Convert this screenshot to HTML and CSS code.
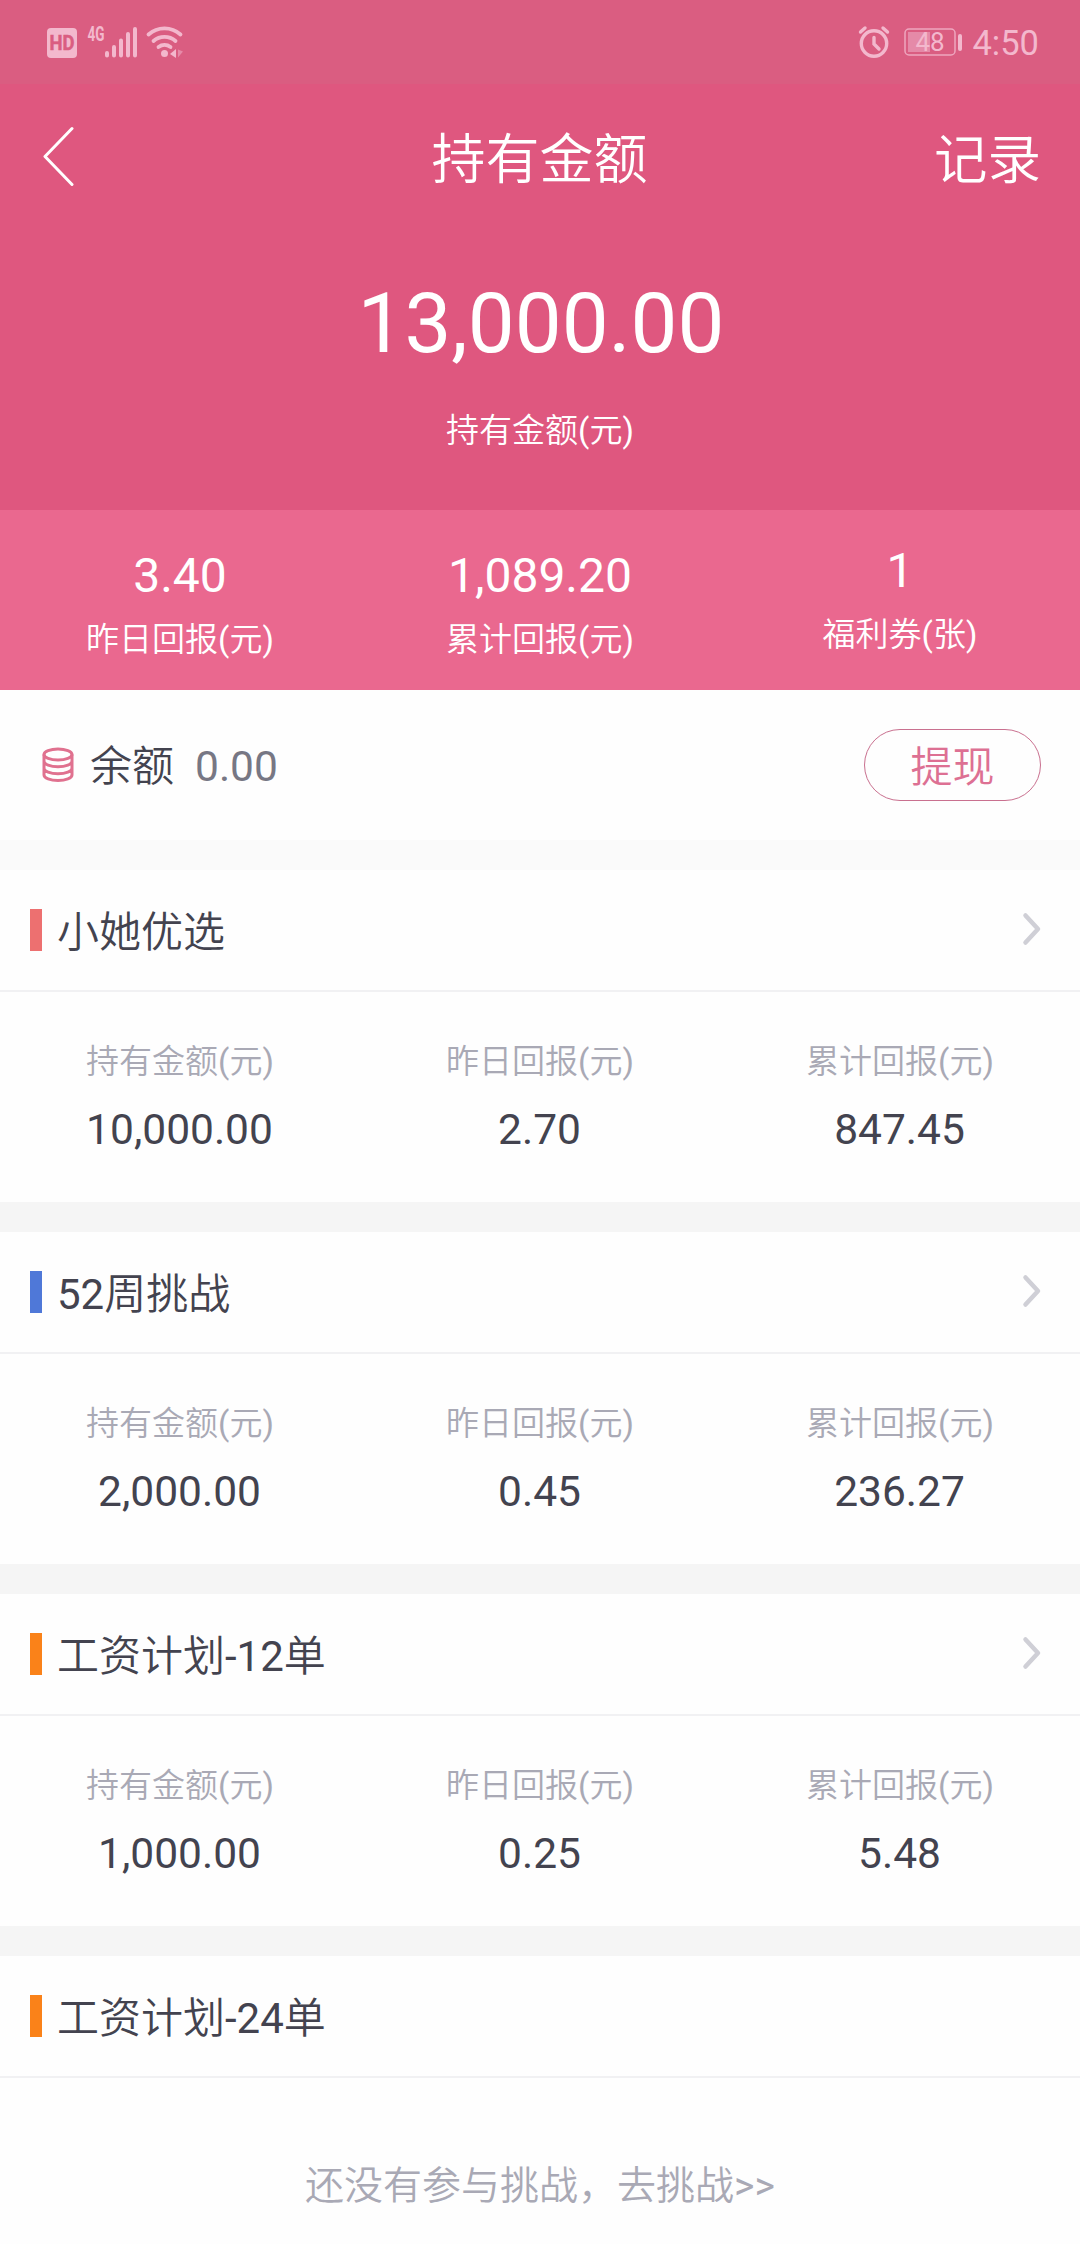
FILE: index.html
```html
<!DOCTYPE html>
<html lang="zh-CN">
<head>
<meta charset="utf-8">
<title>持有金额</title>
<link rel="stylesheet" href="styles.css">
</head>
<body>
<header class="hero">
  <div class="status">
    <svg class="status-left" width="142" height="40" viewBox="0 0 142 40">
      <rect x="4" y="8" width="30" height="30" rx="4" fill="#f3b8cd"/>
      <text x="19" y="30" class="hd" textLength="25" lengthAdjust="spacingAndGlyphs">HD</text>
      <text x="44.500" y="20.500" class="net" textLength="17" lengthAdjust="spacingAndGlyphs">4G</text>
      <g stroke="#f3b8cd" stroke-width="4" stroke-linecap="round">
        <path d="M64 33v2.500M71 27v8.500M78 20.500v15M85 14v21.500M92 9v26.500"/>
      </g>
      <g fill="none" stroke="#f3b8cd" stroke-width="3.800" stroke-linecap="round">
        <path d="M105.500 14.500a24 24 0 0 1 32 0M110.500 21a17 17 0 0 1 22 0M115.500 27a10 10 0 0 1 12 0"/>
      </g>
      <circle cx="121.500" cy="33.500" r="3.500" fill="#f3b8cd"/>
      <path d="M127 34l6-5v9z" fill="#f3b8cd"/>
      <path d="M135 29.500v8l5-6z" fill="#e68aa8"/>
    </svg>
    <div class="status-right">
      <svg width="34" height="34" viewBox="0 0 34 34" fill="none" stroke="#f3b8cd" stroke-linecap="round">
        <circle cx="17" cy="18.500" r="12.700" stroke-width="3.400"/>
        <path d="M17 12.500v6.500l5 5" stroke-width="3.400"/>
        <path d="M3.500 7l4.500-4M30.500 7l-4.500-4" stroke-width="3.400"/>
      </svg>
      <svg class="battery" width="60" height="30" viewBox="0 0 60 30">
        <rect x="1" y="2" width="50" height="26" rx="4" fill="none" stroke="#eea6bf" stroke-width="1.500"/>
        <rect x="4" y="5" width="22" height="20" fill="#e58aa8"/>
        <rect x="54" y="7" width="4" height="17" rx="2" fill="#f3b8cd"/>
        <text x="26" y="24" class="pct">48</text>
      </svg>
      <span class="clock">4:50</span>
    </div>
  </div>
  <nav class="nav">
    <svg class="back" width="32" height="62" viewBox="0 0 32 62" fill="none" stroke="#fff" stroke-width="3" stroke-linecap="round" stroke-linejoin="round"><path d="M29 2.500L2 30.500L29 58.500"/></svg>
    <h1 class="title">持有金额</h1>
    <a class="record">记录</a>
  </nav>
  <div class="total">13,000.00</div>
  <div class="total-label">持有金额<i>(</i>元<i>)</i></div>
</header>
<section class="stats">
  <div class="stat"><b>3.40</b><span>昨日回报<i>(</i>元<i>)</i></span></div>
  <div class="stat"><b>1,089.20</b><span>累计回报<i>(</i>元<i>)</i></span></div>
  <div class="stat stat-coupon"><b>1</b><span>福利券<i>(</i>张<i>)</i></span></div>
</section>
<section class="balance">
  <svg class="coins" width="32" height="36" viewBox="0 0 32 36" fill="none" stroke="#e0718f" stroke-width="3">
    <ellipse cx="16" cy="7.500" rx="14" ry="5.500"/>
    <path d="M2 7.500v20.500c0 3 6.300 5.500 14 5.500s14-2.500 14-5.500V7.500M2 14.300c0 3 6.300 5.500 14 5.500s14-2.500 14-5.500M2 21.200c0 3 6.300 5.500 14 5.500s14-2.500 14-5.500"/>
  </svg>
  <span class="balance-name">余额</span>
  <span class="balance-value">0.00</span>
  <button class="withdraw">提现</button>
</section>
<main class="plans">
  <section class="plan">
    <h2 class="plan-head"><span class="mark red"></span><span class="plan-name">小她优选</span><svg class="more" width="20" height="34" viewBox="0 0 20 34"><path d="M3.500 3.500L16 17L3.500 30.500"/></svg></h2>
    <div class="figures">
      <div class="figure"><span>持有金额<i>(</i>元<i>)</i></span><b>10,000.00</b></div>
      <div class="figure"><span>昨日回报<i>(</i>元<i>)</i></span><b>2.70</b></div>
      <div class="figure"><span>累计回报<i>(</i>元<i>)</i></span><b>847.45</b></div>
    </div>
  </section>
  <section class="plan">
    <h2 class="plan-head"><span class="mark blue"></span><span class="plan-name"><i>52</i>周挑战</span><svg class="more" width="20" height="34" viewBox="0 0 20 34"><path d="M3.500 3.500L16 17L3.500 30.500"/></svg></h2>
    <div class="figures">
      <div class="figure"><span>持有金额<i>(</i>元<i>)</i></span><b>2,000.00</b></div>
      <div class="figure"><span>昨日回报<i>(</i>元<i>)</i></span><b>0.45</b></div>
      <div class="figure"><span>累计回报<i>(</i>元<i>)</i></span><b>236.27</b></div>
    </div>
  </section>
  <section class="plan">
    <h2 class="plan-head"><span class="mark orange"></span><span class="plan-name">工资计划<i>-12</i>单</span><svg class="more" width="20" height="34" viewBox="0 0 20 34"><path d="M3.500 3.500L16 17L3.500 30.500"/></svg></h2>
    <div class="figures">
      <div class="figure"><span>持有金额<i>(</i>元<i>)</i></span><b>1,000.00</b></div>
      <div class="figure"><span>昨日回报<i>(</i>元<i>)</i></span><b>0.25</b></div>
      <div class="figure"><span>累计回报<i>(</i>元<i>)</i></span><b>5.48</b></div>
    </div>
  </section>
  <section class="plan">
    <h2 class="plan-head"><span class="mark orange"></span><span class="plan-name">工资计划<i>-24</i>单</span></h2>
    <p class="empty">还没有参与挑战，去挑战<i>&gt;&gt;</i></p>
  </section>
</main>
</body>
</html>
```
FILE: styles.css
```css
* { box-sizing: border-box; margin: 0; padding: 0; }
body {
  width: 1080px;
  height: 2244px;
  overflow: hidden;
  background: #fefefe;
  color: #43434f;
  font-family: Roboto, "Noto Sans CJK SC", sans-serif;
  font-weight: 350;
}
h1, h2 { font-weight: 350; }
/* Latin digits and brackets sit at regular weight beside the lighter Chinese text */
b, i { font-weight: 400; font-style: normal; }
svg { display: block; flex: none; }

.hero { height: 510px; background: #df577f; color: #fff; text-align: center; }
.status {
  height: 84px;
  padding: 0 41px 0 43px;
  display: flex;
  justify-content: space-between;
  background: #da5d81;
  color: #f3b8cd;
}
.status-left { margin-top: 20px; }
.hd { font: 700 20px Roboto, sans-serif; fill: #da5d81; stroke: #da5d81; stroke-width: 0.5px; text-anchor: middle; }
.net { font: 700 20px Roboto, sans-serif; fill: #f3b8cd; }
.status-right { display: flex; padding-top: 25px; }
.battery { margin: 2px 0 0 13px; }
.pct { font: 400 26px Roboto, sans-serif; fill: #f3b8cd; text-anchor: middle; }
.clock { margin-left: 8px; font-size: 34.5px; line-height: 37px; font-weight: 400; }

.nav {
  height: 150px;
  padding: 0 39px 0 43px;
  display: grid;
  grid-template-columns: 1fr auto 1fr;
  align-items: center;
}
.back { margin-top: -4px; }
.title, .record { padding-top: 4px; font-size: 54px; line-height: 80px; }
.title { margin-left: -5px; }
.record { justify-self: end; font-size: 53.5px; }
.total { margin: 39px 0 0 2px; font-size: 83.5px; line-height: 101px; font-weight: 400; }
.total-label { margin-top: 33px; font-size: 33px; line-height: 48px; }

.stats {
  height: 180px;
  display: grid;
  grid-template-columns: repeat(3, 1fr);
  background: #ea688f;
  color: #fff;
  text-align: center;
}
.stat { display: flex; flex-direction: column; padding-top: 38px; }
.stat-coupon { padding-top: 33px; }
.stat b { font-size: 48px; line-height: 56px; }
.stat span { margin-top: 12px; font-size: 33px; line-height: 48px; }

.balance {
  height: 150px;
  padding: 0 39px 0 42px;
  display: flex;
  align-items: center;
  font-size: 42px;
  line-height: 60px;
}
.balance-name { margin-left: 16px; padding-top: 4px; }
.balance-value { margin-left: 21px; padding-top: 4px; color: #777784; font-size: 42.5px; font-weight: 400; }
.withdraw {
  width: 177px;
  height: 72px;
  margin-left: auto;
  padding-top: 5px;
  border: 1px solid #c9708f;
  border-radius: 36px;
  background: transparent;
  color: #dd7093;
  font: inherit;
}

.plan { height: 362px; border-top: 30px solid #f5f5f5; }
.plan:first-child { border-color: #fafafa; }
.plan-head {
  height: 122px;
  padding: 0 38px 0 30px;
  display: flex;
  align-items: center;
  border-bottom: 2px solid #f1f1f3;
  font-size: 42px;
  line-height: 60px;
}
.plan-name { padding-top: 5px; }
.mark { width: 12px; height: 42px; margin-right: 15px; }
.red { background: #ed7070; }
.blue { background: #4f78d8; }
.orange { background: #fa8219; }
.more { margin: -2px 0 0 auto; fill: none; stroke: #cfcfd6; stroke-width: 4.5px; stroke-linecap: round; stroke-linejoin: round; }
.figures { padding-top: 46px; display: grid; grid-template-columns: repeat(3, 1fr); text-align: center; }
.figure { display: flex; flex-direction: column; }
.figure span { color: #a9a9b5; font-size: 33px; line-height: 48px; }
.figure b { margin: 19px 0 0 -1px; font-size: 42.5px; line-height: 50px; }
.empty { padding-top: 80px; color: #a9a9b5; font-size: 39px; line-height: 56px; text-align: center; }
```
